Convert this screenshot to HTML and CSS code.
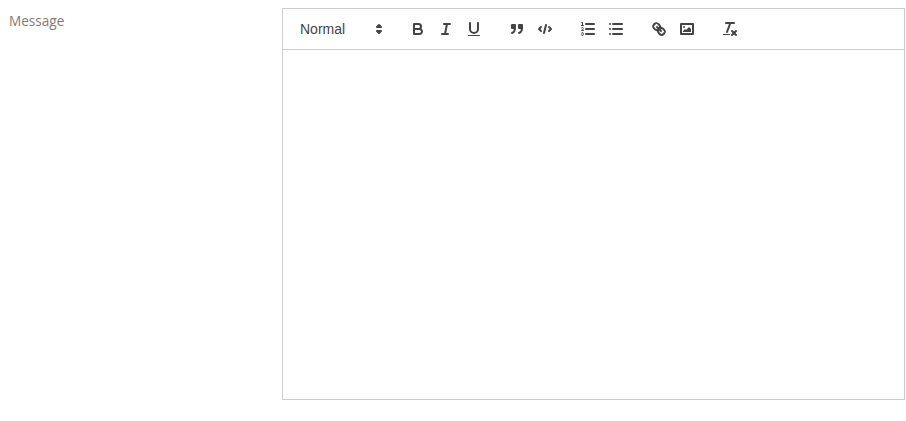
FILE: index.html
```html
<!DOCTYPE html>
<html lang="en">
<head>
    <meta charset="UTF-8">
    <meta name="viewport" content="width=device-width, initial-scale=1.0">
    <title>Message</title>
    <link rel="stylesheet" href="styles.css">
</head>
<body>
    <div class="form-row">
        <label class="form-label">Message</label>
        <div class="editor">
            <div class="toolbar">
                <span class="group">
                    <span class="picker">
                        <span class="picker-label">Normal</span>
                        <svg viewBox="0 0 18 18"><polygon class="stroke" points="7 11 9 13 11 11 7 11"/><polygon class="stroke" points="7 7 9 5 11 7 7 7"/></svg>
                    </span>
                </span>
                <span class="group">
                    <button class="tool" type="button"><svg viewBox="0 0 18 18"><path class="stroke" d="M5,4H9.5A2.5,2.5,0,0,1,12,6.5v0A2.5,2.5,0,0,1,9.5,9H5A0,0,0,0,1,5,9V4A0,0,0,0,1,5,4Z"/><path class="stroke" d="M5,9h5.5A2.5,2.5,0,0,1,13,11.5v0A2.5,2.5,0,0,1,10.5,14H5a0,0,0,0,1,0,0V9A0,0,0,0,1,5,9Z"/></svg></button>
                    <button class="tool" type="button"><svg viewBox="0 0 18 18"><line class="stroke" x1="7" x2="13" y1="4" y2="4"/><line class="stroke" x1="5" x2="11" y1="14" y2="14"/><line class="stroke" x1="8" x2="10" y1="14" y2="4"/></svg></button>
                    <button class="tool" type="button"><svg viewBox="0 0 18 18"><path class="stroke" d="M5,3V9a4.012,4.012,0,0,0,4,4H9a4.012,4.012,0,0,0,4-4V3"/><rect class="fill" height="1" rx="0.5" ry="0.5" width="12" x="3" y="15"/></svg></button>
                </span>
                <span class="group">
                    <button class="tool" type="button"><svg viewBox="0 0 18 18"><rect class="fill stroke" height="3" width="3" x="4" y="5"/><rect class="fill stroke" height="3" width="3" x="11" y="5"/><path class="stroke" d="M7,8c0,4.031-3,5-3,5"/><path class="stroke" d="M14,8c0,4.031-3,5-3,5"/></svg></button>
                    <button class="tool" type="button"><svg viewBox="0 0 18 18"><polyline class="stroke" points="5 7 3 9 5 11"/><polyline class="stroke" points="13 7 15 9 13 11"/><line class="stroke" x1="10" x2="8" y1="5" y2="13"/></svg></button>
                </span>
                <span class="group">
                    <button class="tool" type="button"><svg viewBox="0 0 18 18"><line class="stroke" x1="7" x2="15" y1="4" y2="4"/><line class="stroke" x1="7" x2="15" y1="9" y2="9"/><line class="stroke" x1="7" x2="15" y1="14" y2="14"/><line class="stroke thin" x1="2.5" x2="4.5" y1="5.5" y2="5.5"/><path class="fill" d="M3.5,6A0.5,0.5,0,0,1,3,5.5V3.085l-0.276.138A0.5,0.5,0,0,1,2.053,3c-0.124-.247-0.023-0.324.224-0.447l1-.5A0.5,0.5,0,0,1,4,2.5v3A0.5,0.5,0,0,1,3.5,6Z"/><path class="stroke thin" d="M4.5,10.5h-2c0-.234,1.85-1.076,1.85-2.234A0.959,0.959,0,0,0,2.5,8.156"/><path class="stroke thin" d="M2.5,14.846a0.959,0.959,0,0,0,1.85-.109A0.7,0.7,0,0,0,3.75,14a0.688,0.688,0,0,0,.6-0.736,0.959,0.959,0,0,0-1.85-.109"/></svg></button>
                    <button class="tool" type="button"><svg viewBox="0 0 18 18"><line class="stroke" x1="6" x2="15" y1="4" y2="4"/><line class="stroke" x1="6" x2="15" y1="9" y2="9"/><line class="stroke" x1="6" x2="15" y1="14" y2="14"/><line class="stroke" x1="3" x2="3" y1="4" y2="4"/><line class="stroke" x1="3" x2="3" y1="9" y2="9"/><line class="stroke" x1="3" x2="3" y1="14" y2="14"/></svg></button>
                </span>
                <span class="group">
                    <button class="tool" type="button"><svg viewBox="0 0 18 18"><line class="stroke" x1="7" x2="11" y1="7" y2="11"/><path class="stroke" d="M8.9,4.577a3.476,3.476,0,0,1,.36,4.679A3.476,3.476,0,0,1,4.577,8.9C3.185,7.5,2.035,6.4,4.217,4.217S7.5,3.185,8.9,4.577Z"/><path class="stroke" d="M13.423,9.1a3.476,3.476,0,0,0-4.679-.36,3.476,3.476,0,0,0,.36,4.679c1.392,1.392,2.5,2.542,4.679.36S14.815,10.5,13.423,9.1Z"/></svg></button>
                    <button class="tool" type="button"><svg viewBox="0 0 18 18"><rect class="stroke" height="10" width="12" x="3" y="4"/><circle class="fill" cx="6" cy="7" r="1"/><polyline class="fill" points="5 12 5 11 7 9 8 10 11 7 13 9 13 12 5 12"/></svg></button>
                </span>
                <span class="group">
                    <button class="tool" type="button"><svg viewBox="0 0 18 18"><line class="stroke" x1="5" x2="13" y1="3" y2="3"/><line class="stroke" x1="6" x2="9.35" y1="12" y2="3"/><line class="stroke" x1="11" x2="15" y1="11" y2="15"/><line class="stroke" x1="15" x2="11" y1="11" y2="15"/><rect class="fill" height="1" rx="0.5" ry="0.5" width="7" x="2" y="14"/></svg></button>
                </span>
            </div>
            <div class="editor-body"></div>
        </div>
    </div>
</body>
</html>
```

FILE: styles.css
```css
body {
    margin: 0;
    padding: 8px 1px 0 9px;
    background: #fff;
    font-family: "Liberation Sans", Arial, sans-serif;
}

.form-row {
    display: flex;
}

.form-label {
    width: 273px;
    flex-shrink: 0;
    font-family: "Open Sans", sans-serif;
    font-size: 13.6px;
    line-height: 26px;
    color: #7f7a76;
}

.editor {
    flex-grow: 1;
    border: 1px solid #ccc;
}

.toolbar {
    display: flex;
    padding: 8px;
    border-bottom: 1px solid #ccc;
}

.group {
    display: flex;
    margin-right: 15px;
}

.picker {
    display: flex;
    align-items: center;
    justify-content: space-between;
    width: 98px;
    height: 24px;
    font-size: 14px;
    color: #444;
}

.picker-label {
    padding-left: 9px;
}

.picker svg {
    width: 18px;
    height: 18px;
    margin-right: 1px;
}

.tool {
    width: 28px;
    height: 24px;
    padding: 3px 5px;
    background: none;
    border: none;
    cursor: pointer;
}

.tool svg {
    display: block;
    width: 18px;
    height: 18px;
}

.stroke {
    fill: none;
    stroke: #444;
    stroke-width: 2;
    stroke-linecap: round;
    stroke-linejoin: round;
}

.fill {
    fill: #444;
}

.thin {
    stroke-width: 1;
}

.editor-body {
    height: 349px;
}
```
